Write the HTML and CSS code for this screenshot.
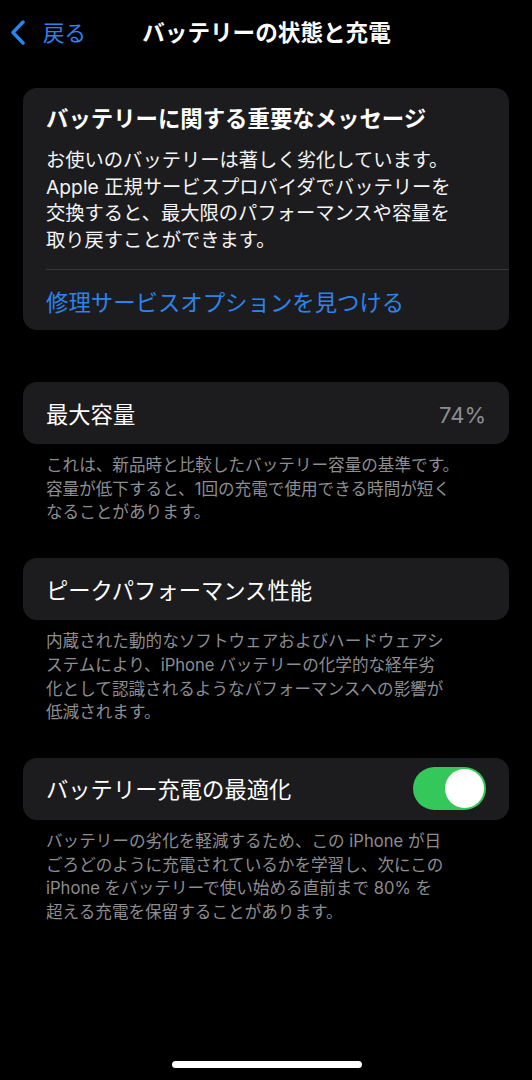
FILE: index.html
```html
<!DOCTYPE html>
<html lang="ja">
<head>
<meta charset="utf-8">
<title>バッテリーの状態と充電</title>
<link rel="stylesheet" href="styles.css">
</head>
<body>
<div class="screen">
  <header class="nav">
    <div class="nav-back">
      <svg class="chev" width="16" height="28" viewBox="0 0 16 28" aria-hidden="true">
        <polyline points="12,3 2,13.5 12,24" fill="none" stroke="#2a84f0" stroke-width="3.4" stroke-linecap="round" stroke-linejoin="round"/>
      </svg>
      <span class="back-label">戻る</span>
    </div>
    <div class="nav-title">バッテリーの状態と充電</div>
    <div class="nav-spacer"></div>
  </header>

  <main class="content">
    <section class="card card-message">
      <div class="msg-title">バッテリーに関する重要なメッセージ</div>
      <p class="msg-body">お使いのバッテリーは著しく劣化しています。<br>Apple 正規サービスプロバイダでバッテリーを<br>交換すると、最大限のパフォーマンスや容量を<br>取り戻すことができます。</p>
      <div class="sep"></div>
      <div class="msg-link">修理サービスオプションを見つける</div>
    </section>

    <section class="group group-first">
      <div class="card row">
        <span class="row-label">最大容量</span>
        <span class="row-value">74%</span>
      </div>
      <p class="footnote">これは、新品時と比較したバッテリー容量の基準です。<br>容量が低下すると、1回の充電で使用できる時間が短く<br>なることがあります。</p>
    </section>

    <section class="group">
      <div class="card row">
        <span class="row-label">ピークパフォーマンス性能</span>
      </div>
      <p class="footnote">内蔵された動的なソフトウェアおよびハードウェアシ<br>ステムにより、iPhone バッテリーの化学的な経年劣<br>化として認識されるようなパフォーマンスへの影響が<br>低減されます。</p>
    </section>

    <section class="group">
      <div class="card row">
        <span class="row-label">バッテリー充電の最適化</span>
        <span class="toggle"><span class="knob"></span></span>
      </div>
      <p class="footnote">バッテリーの劣化を軽減するため、この iPhone が日<br>ごろどのように充電されているかを学習し、次にこの<br>iPhone をバッテリーで使い始める直前まで 80% を<br>超える充電を保留することがあります。</p>
    </section>
  </main>

  <div class="home-indicator"></div>
</div>
</body>
</html>
```

FILE: styles.css
```css
* { box-sizing: border-box; }

html, body {
  margin: 0;
  padding: 0;
  background: #000;
}

body {
  font-family: Inter, "Noto Sans CJK JP", sans-serif;
  color: #fff;
}

.screen {
  position: relative;
  width: 532px;
  height: 1080px;
  background: #000;
  overflow: hidden;
}

.nav {
  height: 64px;
  display: grid;
  grid-template-columns: 1fr auto 1fr;
  align-items: center;
}

.nav-back {
  display: flex;
  align-items: center;
  padding-left: 11px;
  gap: 16px;
  color: #2a84f0;
}

.chev { display: block; margin-top: 1px; }

.back-label {
  font-size: 21.5px;
  line-height: 30px;
  font-family: "Noto Sans CJK JP", sans-serif;
}

.nav-title {
  font-size: 22.6px;
  line-height: 30px;
  font-weight: 700;
  font-family: "Noto Sans CJK JP", sans-serif;
  padding-left: 1px;
}

.content {
  padding: 24px 23px 0;
}

.card {
  background: #1c1c1e;
  border-radius: 14px;
}

.card-message {
  padding: 14px 23px 0;
  overflow: hidden;
}

.msg-title {
  font-size: 22.4px;
  line-height: 30px;
  font-weight: 700;
  font-family: "Noto Sans CJK JP", sans-serif;
}

.msg-body {
  margin: 15px 0 0;
  font-size: 19.3px;
  line-height: 26.5px;
  color: #f4f4f4;
  white-space: nowrap;
}

.sep {
  height: 1px;
  background: #38383a;
  margin: 16px -23px 0 0;
}

.msg-link {
  padding: 16px 0 14px;
  font-size: 22.4px;
  line-height: 30px;
  color: #2a84f0;
  font-family: "Noto Sans CJK JP", sans-serif;
}

.group { margin-top: 33px; }
.group-first { margin-top: 52px; }

.row {
  height: 62px;
  display: flex;
  align-items: center;
  justify-content: space-between;
  padding: 0 23px;
}

.row-label {
  font-size: 22.3px;
  line-height: 30px;
  padding-top: 3px;
}

.row-value {
  font-size: 22px;
  line-height: 30px;
  color: #8d8d92;
  padding-top: 3px;
}

.toggle {
  position: relative;
  width: 73px;
  height: 43px;
  border-radius: 22px;
  background: #34c759;
  display: block;
}

.knob {
  position: absolute;
  right: 2px;
  top: 2px;
  width: 39px;
  height: 39px;
  border-radius: 50%;
  background: #fff;
}

.footnote {
  margin: 0;
  padding: 10px 23px 0;
  font-size: 16.6px;
  line-height: 23.7px;
  color: #8d8d92;
  white-space: nowrap;
}

.home-indicator {
  position: absolute;
  left: 172px;
  top: 1061px;
  width: 190px;
  height: 7px;
  border-radius: 4px;
  background: #fff;
}
```
